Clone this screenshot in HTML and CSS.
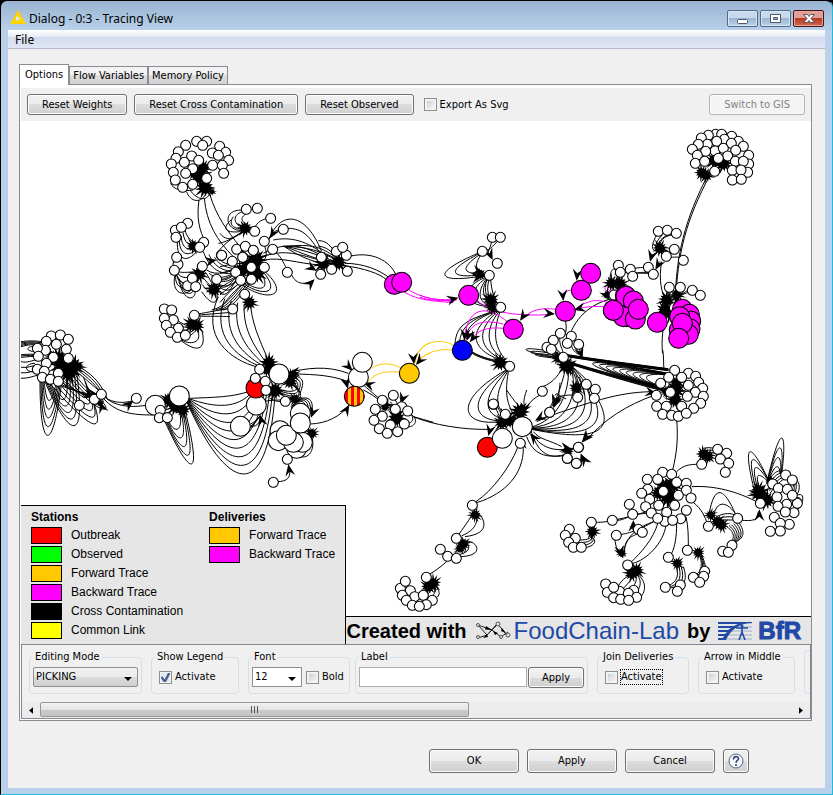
FILE: index.html
```html
<!DOCTYPE html>
<html lang="en">
<head>
<meta charset="utf-8">
<title>Dialog - 0:3 - Tracing View</title>
<link rel="stylesheet" href="styles.css">
</head>
<body>
<div class="window">
  <header class="titlebar">
    <svg class="app-icon" viewBox="0 0 16 14" aria-hidden="true"><path d="M8 0 16 14H0Z" fill="#ffd200"/><path d="M6 6v5l5-2.500Z" fill="#dbe6f0"/></svg>
    <h1 class="title">Dialog - 0:3 - Tracing View</h1>
    <button class="win-btn" aria-label="Minimize"><svg viewBox="0 0 29 15"><rect x="9.500" y="8.500" width="10" height="4" rx="1" fill="#fff" stroke="#535666"/></svg></button>
    <button class="win-btn" aria-label="Maximize"><svg viewBox="0 0 29 15"><path d="M9.500 3.500h10v8h-10ZM12.500 6.500v2h4v-2Z" fill="#fff" fill-rule="evenodd" stroke="#535666"/></svg></button>
    <button class="win-btn close" aria-label="Close"><svg viewBox="0 0 29 15"><path d="M9.500 3.500h4l1.500 2 1.500-2h4l-3.500 4 3.500 4h-4l-1.500-2-1.500 2h-4l3.500-4Z" fill="#fff" stroke="#535666"/></svg></button>
  </header>
  <div class="client">
    <nav class="menubar"><button class="menu">File</button></nav>
    <main class="content">
      <div class="tabs" role="tablist">
        <button class="tab active" role="tab" aria-selected="true">Options</button>
        <button class="tab" role="tab">Flow Variables</button>
        <button class="tab" role="tab">Memory Policy</button>
      </div>
      <section class="panel">
        <div class="toolbar">
          <button class="btn">Reset Weights</button>
          <button class="btn">Reset Cross Contamination</button>
          <button class="btn">Reset Observed</button>
          <label class="check"><input type="checkbox">Export As Svg</label>
          <button class="btn push" disabled>Switch to GIS</button>
        </div>
        <div class="canvas">
          <svg id="graph" class="graph" viewBox="21 121 790 523" preserveAspectRatio="xMinYMin slice" role="img" aria-label="Delivery network">
            <defs><pattern id="stripes" width="18" height="60" patternUnits="userSpaceOnUse" x="375"><rect width="18" height="60" fill="#ffc800"/><rect width="9" height="60" fill="#f00"/></pattern></defs>
          </svg>
          <div class="credits">
            <strong class="by">Created with</strong>
            <svg class="lab-mark" viewBox="0 0 36 20" aria-hidden="true"><g fill="none" stroke="#222"><path d="M3 4 17 9 23 3 33 16M3 17 12 14 22 3M3 4 12 14 17 9 26 16 33 11"/></g><g fill="#e6e6e6" stroke="#555"><circle cx="3" cy="4" r="1.500"/><circle cx="3" cy="16" r="1.500"/><circle cx="23" cy="3" r="2"/><circle cx="26" cy="16" r="1.500"/><circle cx="33" cy="14" r="2"/></g><path d="m11 5 6 4-7-.500ZM8 17l4-4 1 3ZM18 10l5 2-3 2ZM27 7l4 5-5-2Z"/></svg>
            <span class="lab">FoodChain-Lab</span>
            <strong class="by">by</strong>
            <svg class="bfr-mark" viewBox="0 0 34 18" aria-hidden="true"><path d="M0 1h34M0 5h34M0 9h34M0 13h34M0 17h34" stroke="#c3cad6" stroke-width="2"/><path d="M0 0h34v1C22 1 12 8 8 18H0v-2h5l1-2H0v-2h7l2-2H0V8h10l3-2H0V4h16l4-2H0Z" fill="#2149a5"/><path d="M18 6h12M24 5v6M24 10l-3 8M24 10l3 8" stroke="#2149a5" fill="none" stroke-width="1.600"/><circle cx="24" cy="4" r="1.500" fill="#2149a5"/></svg>
            <span class="bfr">BfR</span>
          </div>
          <div class="legend">
            <div class="legend-col">
              <h2>Stations</h2>
              <ul>
                <li><i class="swatch red"></i>Outbreak</li>
                <li><i class="swatch green"></i>Observed</li>
                <li><i class="swatch orange"></i>Forward Trace</li>
                <li><i class="swatch magenta"></i>Backward Trace</li>
                <li><i class="swatch black"></i>Cross Contamination</li>
                <li><i class="swatch yellow"></i>Common Link</li>
              </ul>
            </div>
            <div class="legend-col">
              <h2>Deliveries</h2>
              <ul>
                <li><i class="swatch orange"></i>Forward Trace</li>
                <li><i class="swatch magenta"></i>Backward Trace</li>
              </ul>
            </div>
          </div>
        </div>
        <div class="options">
          <div class="option-row">
            <fieldset class="w-mode"><legend>Editing Mode</legend><select class="mode" aria-label="Editing Mode"><option>PICKING</option></select></fieldset>
            <fieldset class="w-show"><legend>Show Legend</legend><label class="check"><input type="checkbox" checked>Activate</label></fieldset>
            <fieldset class="w-font"><legend>Font</legend><select class="size" aria-label="Font size"><option>12</option></select><label class="check"><input type="checkbox">Bold</label></fieldset>
            <fieldset class="w-label"><legend>Label</legend><input class="text" type="text" aria-label="Label"><button class="btn">Apply</button></fieldset>
            <fieldset class="w-join"><legend>Join Deliveries</legend><label class="check"><input type="checkbox"><span class="focus">Activate</span></label></fieldset>
            <fieldset class="w-arrow"><legend>Arrow in Middle</legend><label class="check"><input type="checkbox">Activate</label></fieldset>
            <fieldset class="w-arrow"></fieldset>
          </div>
          <div class="scrollbar">
            <button class="scroll-arrow" aria-label="Scroll left"><svg viewBox="0 0 5 8"><path d="M5 0v8L0 4Z"/></svg></button>
            <div class="track"><div class="thumb"><i></i><i></i><i></i></div></div>
            <button class="scroll-arrow" aria-label="Scroll right"><svg viewBox="0 0 5 8"><path d="M0 0v8l5-4Z"/></svg></button>
          </div>
        </div>
      </section>
      <footer class="actions">
        <button class="btn wide">OK</button>
        <button class="btn wide">Apply</button>
        <button class="btn wide">Cancel</button>
        <button class="btn help" aria-label="Help"><svg viewBox="0 0 16 16"><circle cx="8" cy="8" r="7" fill="#f4f7fb" stroke="#53647f"/><path d="M5.500 6.500c0-4 5-3.500 5-.800 0 1.800-2.400 1.800-2.400 4M8 11v2" fill="none" stroke="#33486e" stroke-width="1.600"/></svg></button>
      </footer>
    </main>
  </div>
</div>
<script src="graph.js"></script>
</body>
</html>
```

FILE: graph.js
```js
// Each region has its own origin; its units are a third of a pixel.
// curves: [count, first cubic, last cubic, colour]; the curves between are interpolated.
const regions = [
  { at: [20, 120],
    curves: [
      [1, [537,240,530,290,535,330,560,372]], [1, [553,235,560,310,590,360,640,410]], [1, [570,225,590,290,620,330,660,380]],
      [1, [500,215,510,245,545,255,560,215]], [1, [510,210,530,240,560,245,570,220]], [1, [452,190,460,210,490,215,520,210]],
      [5, [472,365,470,420,500,430,530,395], [495,330,500,350,510,360,525,370]],
      [5, [465,465,450,530,510,540,535,480], [475,455,490,460,510,455,540,455]],
      [4, [480,495,500,560,540,530,520,500], [470,465,490,500,500,500,530,490]],
      [4, [545,515,590,580,600,530,585,500], [550,450,570,470,570,490,580,490]],
      [4, [550,395,560,420,580,470,650,460], [600,420,610,430,620,430,650,440]],
      [5, [590,490,610,520,640,520,670,470], [560,450,590,470,620,455,660,440]],
      [4, [575,570,620,560,640,520,680,480], [610,570,640,560,650,540,690,490]],
      [2, [633,300,600,330,620,345,690,330], [640,290,620,320,650,330,680,325]]
    ],
    arrows: [[590,420,-10]],
    stars: [[540,168,34],[555,203,30],[550,143,24],[575,215,12],[520,378,22],[538,462,26],[582,508,26],[520,160,18]],
    small: '530,64 560,64 497,76 548,76 599,79 475,95 617,97 577,99 515,108 595,106 468,115 626,121 493,127 536,121 454,132 578,136 607,136 518,146 460,157 497,160 611,160 466,180 560,175 518,193 488,202 503,310 466,331 484,322 468,352 551,367 539,382 474,433 470,412 604,406 547,439 463,451 503,497 517,475 590,478 527,500' },
  { at: [220, 120],
    curves: [
      [3, [65,270,0,270,20,340,70,330], [90,275,60,290,60,300,80,315]],
      [3, [0,340,30,380,60,330,80,330], [-10,400,30,350,60,345,80,330]],
      [1, [104,325,110,305,130,298,142,295]],
      [1, [142,370,180,260,260,280,305,395]], [1, [160,360,210,350,260,360,320,410]],
      [1, [202,325,250,325,270,350,300,400]], [1, [145,360,160,330,175,330,180,330]],
      [3, [133,420,180,410,230,430,300,435], [130,400,200,360,260,380,310,410]],
      [5, [190,378,240,410,290,435,340,430], [200,380,270,370,310,380,355,420]],
      [1, [165,395,185,410,190,430,200,445]], [1, [215,465,230,495,255,495,280,480]],
      [3, [295,362,320,362,330,375,360,415], [295,395,320,400,335,410,355,420]],
      [1, [385,410,440,395,500,410,527,462]], [1, [375,430,430,430,480,450,510,475]], [1, [375,437,430,445,480,460,500,480]],
      [3, [60,490,140,550,220,530,130,450], [80,490,110,510,160,520,120,450]],
      [5, [0,520,40,540,40,450,90,440], [0,440,40,430,60,430,90,430]],
      [4, [50,400,80,380,90,420,100,430], [130,370,145,400,140,420,120,430]],
      [5, [0,570,30,520,60,500,90,470], [0,480,40,470,60,450,90,450]],
      [1, [560,505,590,525,610,535,700,545], null, '#f0f'], [1, [550,515,590,538,620,542,700,548], null, '#f0f']
    ],
    arrows: [[290,452,30],[284,478,-45],[150,355,120]],
    stars: [[75,325,24],[108,418,32],[90,440,38],[110,460,30],[60,450,24],[310,430,28],[355,428,28],[88,548,24]],
    small: '79,268 112,265 152,295 104,334 190,328 133,364 158,388 50,388 76,379 100,391 68,412 37,424 5,406 94,442 133,442 47,457 62,481 94,478 74,523 38,567 202,457 302,463 335,448 382,454 349,394 379,406 368,382 304,412',
    big: [['#f0f','523,493 545,487']] },
  { at: [420, 220],
    curves: [
      [4, [178,98,20,165,60,190,185,168], [182,105,160,140,170,150,190,155]],
      [1, [215,65,210,85,205,90,205,100]], [1, [235,62,215,80,210,90,200,90]],
      [3, [202,180,180,210,190,240,225,255], [212,180,215,210,220,230,232,250]],
      [4, [200,172,160,180,80,250,220,262], [200,178,190,210,200,250,225,260]],
      [4, [232,272,140,330,150,390,248,422], [240,275,220,330,220,380,258,420]],
      [3, [235,270,130,300,110,320,105,370], [235,270,160,300,140,320,130,370]],
      [3, [130,380,160,410,200,420,250,430], [155,395,190,415,220,420,250,425]],
      [5, [258,450,100,540,120,620,240,605], [265,455,250,540,270,560,285,595]],
      [1, [435,300,440,310,440,330,435,345]], [1, [582,235,500,250,460,310,450,345]],
      [1, [367,500,400,490,420,460,435,430]], [1, [360,525,330,540,310,570,300,600]],
      [4, [395,375,360,360,360,400,420,410], [421,345,415,370,425,380,430,400]],
      [3, [454,360,450,390,470,400,480,405], [476,373,480,390,480,400,485,410]],
      [4, [445,430,480,460,520,490,530,535], [440,430,470,460,470,490,475,520]],
      [3, [570,180,570,130,600,140,590,190], [600,150,610,160,605,180,600,195]],
      [1, [0,225,30,240,60,240,110,238], null, '#f0f'], [1, [0,232,30,242,60,243,110,240], null, '#f0f'],
      [1, [170,240,210,280,300,290,400,283], null, '#f0f'], [1, [410,268,360,262,330,270,305,300], null, '#f0f'],
      [1, [265,308,200,250,140,260,133,360], null, '#f0f'], [1, [250,312,200,300,150,300,138,360], null, '#f0f'],
      [1, [250,325,200,320,170,330,150,365], null, '#f0f'],
      [1, [484,215,440,200,430,220,430,240], null, '#f0f'], [1, [570,250,520,230,490,250,462,270], null, '#f0f'], [1, [550,260,510,258,490,262,462,268], null, '#f0f'],
      [3, [590,220,540,220,550,190,580,190], [600,220,570,210,560,200,590,190], '#f0f'],
      [1, [100,375,60,355,15,365,-2,395], null, '#ffc800'], [1, [98,390,60,385,15,395,-12,430], null, '#ffc800']
    ],
    arrows: [[115,233,-15],[405,282,5],[300,302,125],[133,362,95],[140,362,110],[150,367,125],[430,243,85],[470,182,95],[462,270,165],[218,120,65],[190,160,20],[190,168,-10],[400,565,110],[568,240,60],[488,415,70]],
    stars: [[182,163,18],[212,240,26],[216,262,20],[240,428,26],[438,438,28],[470,502,20],[575,190,24],[600,195,20],[560,225,14],[415,415,20],[300,575,30]],
    small: '217,52 241,52 187,94 232,130 208,166 242,262 269,439 221,553 421,340 454,349 400,361 381,382 442,370 476,373 394,388 430,412 367,514 499,493 526,508 473,532 523,535 595,136 601,157 582,225',
    big: [['#f0f','146,226 280,328 436,274 512,160 484,211 616,228 620,290 580,271'],['#00f','127,391']] },
  { at: [620, 120],
    curves: [
      [2, [270,165,198,300,172,400,167,550], [266,160,194,300,169,400,165,550]],
      [1, [125,425,115,480,125,520,140,550]], [1, [120,425,120,440,110,445,105,450]],
      [4, [110,345,90,380,95,400,120,390], [160,345,130,345,115,370,120,380]], [1, [155,388,140,380,130,385,125,385]],
      [1, [185,412,160,410,150,412,145,415]], [1, [85,442,60,442,45,444,31,448]], [1, [90,458,60,455,45,460,38,462]],
      [1, [30,480,10,490,0,500,-10,510]], [1, [0,456,20,458,60,460,90,460]],
      [3, [148,510,130,540,120,560,130,590], [150,515,150,540,140,560,140,580]], [3, [215,515,190,520,170,530,165,550], [190,508,190,520,170,530,170,550]],
      [1, [136,590,125,640,125,680,128,700]]
    ],
    arrows: [[90,425,105],[106,449,120]],
    stars: [[285,120,28],[310,130,28],[245,158,22],[258,166,22],[120,385,24],[170,525,22],[140,540,26],[133,570,24],[150,580,24],[0,490,22]],
    small: '287,43 265,46 305,43 335,49 244,54 313,58 290,64 355,64 262,73 235,73 334,70 370,79 217,88 285,93 310,85 347,91 257,94 232,106 386,106 323,108 295,115 226,130 386,132 254,124 346,124 370,124 284,154 383,157 337,151 363,150 337,180 364,178 115,334 142,331 169,340 163,388 139,409 190,421 85,442 31,448 38,469 100,463 148,502 181,502 217,511 241,526 163,563',
    big: [['#f0f','18,529 40,543 10,590 -20,571 46,597 55,568 112,607 187,568 208,583 212,603 178,630 210,627 205,643 179,590 187,610 176,655']] },
  { at: [20, 310],
    curves: [
      [5, [60,215,60,430,100,430,125,215], [72,215,80,280,90,300,110,215]],
      [5, [75,215,150,390,200,400,170,190], [90,215,120,290,150,290,140,190]],
      [5, [85,215,220,370,260,380,215,260], [120,190,200,290,220,280,190,200]],
      [4, [110,160,230,330,290,310,240,270], [150,170,200,250,230,260,245,245]],
      [4, [170,165,210,190,240,210,262,268], [150,170,190,200,210,220,235,240]],
      [4, [90,215,130,230,180,250,230,255], [110,190,150,240,190,255,230,270]],
      [5, [3,95,25,92,40,92,70,95], [3,110,25,105,40,100,60,110]],
      [3, [3,134,25,132,40,132,60,135], [3,142,25,140,40,138,60,140]],
      [4, [3,205,25,205,35,200,55,195], [3,155,25,160,35,150,50,150]],
      [2, [50,125,10,125,20,105,50,110], [50,185,10,190,10,160,45,160]],
      [1, [255,262,280,280,310,280,340,272]], [1, [262,268,300,295,350,290,380,286]], [1, [250,265,290,310,340,315,400,315]],
      [5, [435,335,510,500,550,520,495,300], [445,330,460,370,490,370,480,310]],
      [2, [475,85,540,140,560,110,545,60], [485,90,520,110,550,90,530,60]],
      [3, [530,18,570,20,600,18,630,20], [530,13,570,5,590,2,630,-5]],
      [5, [470,30,500,50,510,50,530,50], [480,85,520,80,530,60,530,50]],
      [5, [430,275,450,260,460,255,470,260], [430,310,455,310,460,290,480,290]]
    ],
    arrows: [[340,272,-40],[240,275,-110],[235,255,10],[225,262,20],[190,165,0]],
    stars: [[115,145,30],[130,165,38],[160,168,32],[145,185,36],[95,140,20],[515,42,24],[530,46,24],[445,270,24],[465,290,26],[488,300,24],[240,280,12]],
    small: '94,78 121,75 79,94 145,88 109,103 139,118 76,121 52,115 55,139 100,142 79,160 145,145 52,178 73,184 115,190 67,202 91,208 115,214 178,286 223,268 244,253 349,265 433,-3 455,0 460,30 433,25 439,46 475,55 451,67 472,82 496,76 523,16',
    big: [['#fff','406,286 478,258']], late: '421,301 418,323 442,323' },
  { at: [220, 310],
    curves: [
      [6, [-5,-40,-60,80,30,150,115,172], [92,-10,100,60,130,110,148,160]],
      [10, [-92,265,-20,262,40,262,90,243], [-100,275,20,545,140,590,165,255]],
      [2, [385,190,320,165,260,175,205,187], [385,215,320,190,260,195,205,190]],
      [1, [370,210,376,214,380,220,382,232]], [1, [272,342,320,340,360,320,388,285]],
      [4, [220,215,280,290,200,270,170,245], [210,220,250,240,220,250,180,240]],
      [3, [230,240,240,220,230,210,205,200], [240,250,260,200,240,205,210,190]],
      [4, [215,300,220,260,290,240,275,310], [215,290,230,270,260,260,260,310]],
      [1, [240,440,280,450,290,390,265,360]],
      [1, [170,515,200,515,215,505,208,470]], [1, [90,350,120,350,120,330,120,315]],
      [3, [40,370,70,380,90,360,120,318], [75,350,100,340,110,330,120,318]],
      [1, [430,225,460,250,470,260,482,268]], [1, [430,240,450,250,465,260,480,272]],
      [1, [580,320,600,325,620,332,640,337]], [2, [575,315,600,330,580,355,560,350], [570,310,590,330,570,345,550,340]],
      [6, [466,300,480,285,500,285,530,320], [540,260,545,280,550,300,530,320]],
      [2, [150,265,165,275,180,275,190,275], [130,275,150,270,170,270,190,270]],
      [1, [455,175,480,155,520,160,545,175], null, '#ffc800'], [1, [440,220,470,180,510,185,540,186], null, '#ffc800'],
      [1, [630,98,600,110,590,130,585,160], null, '#ffc800'], [1, [630,130,610,135,600,150,595,163], null, '#ffc800']
    ],
    arrows: [[205,188,175],[205,192,190],[398,182,45],[384,236,75],[388,284,-60],[430,218,200],[582,163,85],[588,165,130],[273,323,110],[262,360,225],[205,463,-100],[120,315,-105],[542,282,110],[488,295,140]],
    stars: [[147,158,26],[140,180,20],[165,242,28],[215,195,18],[210,215,24],[225,268,20],[275,370,20],[530,325,30],[495,293,14]],
    small: '520,256 487,271 466,298 545,290 526,298 563,303 487,319 462,331 478,356 511,345 553,342 533,365 502,370',
    big: [['#fff','109,285'],['#f00','108,234'],['#fff','61,349 177,192 180,362 230,415 175,392 247,397 220,397 199,376 241,310 241,339 415,202 427,157'],['url(#stripes)','403,259'],['#ffc800','568,190']],
    late: '119,178 106,205 136,214 138,241 196,274 202,448 160,517' },
  { at: [540, 340],
    curves: [
      [9, [385,100,90,45,80,60,370,150], [385,105,290,95,310,125,370,140]],
      [7, [70,42,180,60,280,72,385,86], [80,50,180,66,280,80,385,92]],
      [6, [70,60,180,94,280,120,370,143], [75,68,180,100,280,130,370,153]],
      [3, [70,55,-100,30,-60,10,80,45], [60,55,-40,50,-40,30,60,50]],
      [7, [-30,262,60,240,90,150,85,80], [-25,268,230,320,220,240,150,140]],
      [1, [345,155,250,155,180,175,0,238]], [1, [345,165,260,195,190,240,140,300]],
      [2, [-30,270,0,330,50,335,100,325], [-20,290,0,350,40,355,80,345]],
      [4, [30,205,40,170,60,165,100,165], [75,90,70,120,50,180,35,200]],
      [1, [368,30,372,50,370,70,372,90]], [1, [410,235,415,300,410,340,398,390]],
      [1, [410,395,430,375,450,373,475,373]], [1, [455,440,540,435,610,465,650,485]], [1, [450,480,480,500,490,520,500,545]],
      [1, [355,545,340,600,300,640,275,665]], [1, [378,555,370,610,320,660,278,670]], [1, [410,550,410,590,405,620,395,640]], [1, [438,530,445,560,445,590,445,618]],
      [1, [154,547,180,547,200,547,217,541]], [1, [217,541,250,535,270,530,320,515]], [1, [225,595,225,620,235,635,245,650]],
      [2, [340,545,300,560,260,580,250,640], [300,580,260,590,250,610,255,650]], [2, [229,586,260,580,280,580,350,540], [217,541,260,545,260,520,330,520]],
      [2, [595,545,560,450,525,420,508,520], [593,530,560,480,530,480,520,530]],
      [3, [590,530,575,515,550,520,530,530], [590,540,570,540,560,540,540,540]],
      [6, [595,545,620,580,610,600,575,610], [560,560,590,580,580,600,570,610]], [1, [600,540,640,545,655,540,655,515]],
      [4, [645,460,600,280,640,320,685,420], [660,450,640,390,660,400,690,430]],
      [4, [680,430,730,210,740,300,725,400], [685,430,700,370,720,370,720,400]],
      [5, [680,430,710,380,730,380,760,430], [690,460,760,360,800,440,765,470]],
      [3, [770,510,800,480,790,450,765,470], [760,520,790,500,780,480,765,480]],
      [4, [490,325,510,320,520,325,533,328], [490,350,510,345,520,340,541,357]],
      [4, [150,590,180,600,160,630,110,622], [160,580,150,600,140,600,110,600]],
      [5, [290,700,340,740,300,790,270,780], [280,700,260,710,240,720,230,750]],
      [4, [430,680,445,720,430,745,400,745], [410,680,420,720,400,730,380,740]],
      [4, [485,645,505,690,500,710,470,715], [480,650,490,680,480,700,465,705]]
    ],
    arrows: [[130,305,125],[95,330,15],[125,345,-120],[38,198,110],[658,508,-90],[250,655,65],[244,652,80],[280,540,-90],[350,160,10]],
    stars: [[405,150,32],[405,180,26],[410,130,24],[380,155,20],[85,335,14],[375,440,30],[385,470,34],[400,435,28],[355,460,24],[110,145,20],[85,80,24],[490,342,22],[504,350,22],[658,460,30],[680,480,28],[690,420,14],[655,450,24],[512,525,18],[532,545,22],[545,555,22],[157,575,22],[275,700,24],[290,692,24],[412,670,20],[475,638,20],[245,640,14],[280,560,10]],
    small: '404,91 386,112 445,100 425,112 467,109 362,130 476,127 445,136 488,145 391,157 466,157 349,166 442,169 490,169 350,199 379,199 425,199 482,190 461,205 368,223 395,226 415,229 439,220 29,217 116,322 82,355 110,370 368,397 395,403 322,418 353,418 410,427 439,430 323,448 305,460 370,454 439,451 415,466 453,474 329,478 356,496 404,496 317,500 439,511 334,519 380,517 374,544 422,536 398,541 353,535 268,493 278,523 217,541 154,547 229,586 295,568 307,577 263,675 88,568 76,586 106,595 86,607 100,622 124,622 197,732 202,757 239,754 221,742 281,751 221,773 242,778 265,760 290,772 266,781 385,652 421,735 376,742 412,754 442,631 494,694 460,712 491,709 479,727 505,559 593,535 576,616 548,634 565,637 485,373 533,328 560,340 541,357 566,370 556,397 661,490 737,405 698,432 757,420 715,445 742,448 711,471 772,490 757,466 740,493 714,499 762,518 736,516 703,532 748,553 721,550 691,574 721,573' },
  { at: [380, 400],
    curves: [
      [1, [100,50,160,75,250,90,330,88]], [1, [412,145,390,200,340,270,288,305]], [1, [430,145,430,220,380,280,290,308]],
      [3, [255,410,340,400,310,350,290,335], [235,405,260,370,275,350,280,335]],
      [3, [235,470,320,470,290,420,260,425], [225,460,240,445,245,440,250,430]],
      [1, [150,522,170,510,185,498,200,485]], [4, [135,600,200,600,175,560,160,555], [120,600,130,570,140,570,150,560]],
      [5, [345,20,360,50,365,70,380,80], [380,30,390,50,400,60,410,65]], [2, [435,20,430,10,430,0,440,-30], [418,20,410,10,400,0,380,-30]],
      [1, [460,95,480,120,510,120,545,140]], [1, [440,110,460,165,500,175,550,165]], [1, [470,65,490,55,500,50,509,42]]
    ],
    arrows: [[325,108,105],[420,45,75],[433,42,95],[465,62,150],[450,100,-130],[580,150,10],[602,160,-110],[520,20,110],[605,128,130],[425,112,-90]],
    stars: [[365,68,24],[385,62,24],[400,60,18],[285,345,20],[250,432,22],[240,445,18],[145,560,24],[160,550,24],[565,155,14]],
    small: '421,130 340,12 376,43 509,37 595,142 562,175 589,190 277,316 229,415 181,448 203,469 229,475 139,532 61,565 76,544 91,572 67,586 104,590 130,586 79,601 157,601 97,616 139,614 118,619',
    big: [['#f00','322,142'],['#fff','367,115 427,80']] }
];

const NS = 'http://www.w3.org/2000/svg';
const svg = document.getElementById('graph');

function add(parent, name, attrs) {
  const el = document.createElementNS(NS, name);
  for (const key in attrs) el.setAttribute(key, attrs[key]);
  parent.appendChild(el);
  return el;
}

// A burst of arrowheads that meet at one station.
function starPath([x, y, r]) {
  let d = '';
  for (let i = 0; i < 26; i++) {
    const a = i * Math.PI / 13 + r;
    const len = i % 2 ? r * 0.55 : r * (1.1 + 0.25 * Math.sin(i * 2.3 + x));
    d += (i ? 'L' : 'M') + (x + len * Math.cos(a)).toFixed(1) + ' ' + (y + len * Math.sin(a)).toFixed(1);
  }
  return d + 'Z';
}

function layer(region, cls) {
  return add(svg, 'g', { class: cls, transform: `translate(${region.at}) scale(.33333)` });
}

function circles(parent, points, r, fill) {
  for (const p of points.split(' ')) {
    const [cx, cy] = p.split(',');
    add(parent, 'circle', { cx, cy, r, fill });
  }
}

for (const region of regions) {
  const g = layer(region, 'edges');
  for (const [n, a, b, colour] of region.curves) {
    for (let i = 0; i < n; i++) {
      const c = a.map((v, k) => n > 1 ? v + (b[k] - v) * i / (n - 1) : v);
      add(g, 'path', { d: `M${c.slice(0, 2)}C${c.slice(2)}`, stroke: colour || '#000' });
    }
  }
}
for (const region of regions) {
  const g = layer(region, 'heads');
  for (const star of region.stars) add(g, 'path', { d: starPath(star) });
  for (const [x, y, a] of region.arrows) {
    add(g, 'path', { d: 'M0 0-35-15-22 0-35 15Z', transform: `translate(${x} ${y}) rotate(${a})` });
  }
}
for (const region of regions) {
  const g = layer(region, 'nodes');
  circles(g, region.small, 15, '#fff');
  for (const [fill, points] of region.big || []) circles(g, points, 30, fill);
  if (region.late) circles(g, region.late, 15, '#fff');
}
```

FILE: styles.css
```css
* { box-sizing: border-box; }
html { background: #000; }
body, button, input, select, fieldset, h1, h2, ul { margin: 0; padding: 0; }
body, button, input, select {
  font: 11px/14px "DejaVu Sans Condensed", "Noto Sans", sans-serif;
  color: #000;
}
button, input, select { border-radius: 0; }

.window {
  min-height: 100vh;
  display: flex;
  flex-direction: column;
  padding: 2px 7px 6px;
  border: 1px solid #000;
  border-right-color: #26b8d8;
  border-bottom-color: #26b8d8;
  border-radius: 7px 7px 0 0;
  background: linear-gradient(#99b4d1, #b9d1ea 30px);
}
.titlebar { display: flex; align-items: center; gap: 2px; height: 27px; }
.app-icon { width: 16px; height: 14px; margin: 0 1px 0 2px; }
.title { flex: 1; font: 12px/16px "Noto Sans", sans-serif; padding-top: 4px; }
.win-btn {
  width: 31px;
  height: 17px;
  margin-top: 4px;
  border: 1px solid #566a85;
  border-radius: 2px;
  background: linear-gradient(#c7d9ec 50%, #9bb5d0 50%, #bcd4ec);
  box-shadow: inset 0 0 0 1px #d6e5f4;
}
.win-btn:first-of-type { margin-right: 0; }
.win-btn svg { display: block; width: 29px; height: 15px; }
.win-btn.close {
  margin-right: 1px;
  border-color: #451318;
  background: linear-gradient(#dfa096 50%, #b83a22 50%, #d0664c);
  box-shadow: inset 0 0 0 1px #e5a79b;
}

.client { flex: 1; display: flex; flex-direction: column; background: #f0f0f0; }
.menubar {
  height: 19px;
  border-bottom: 1px solid #b6bccc;
  background: linear-gradient(#fff, #e5eaf5 7px, #d4dbed 7px, #e1e6f6);
}
.menu { border: 0; background: none; padding: 3px 7px; font: 12px/14px "Noto Sans", sans-serif; }
.content { flex: 1; display: flex; flex-direction: column; padding: 15px 13px 15px 11px; }

.tabs { display: flex; align-items: flex-end; height: 21px; }
.tab {
  height: 18px;
  padding: 1px 3px 0;
  margin-bottom: 1px;
  white-space: nowrap;
  border: 1px solid #898c95;
  border-bottom: 0;
  background: linear-gradient(#f3f3f3 50%, #dedede 50%, #d2d2d2);
}
.tab.active { position: relative; height: 21px; padding: 0 5px 1px; margin-bottom: 0; background: #fff; }
.panel {
  flex: 1;
  display: flex;
  flex-direction: column;
  margin-top: -1px;
  padding: 3px 0 1px 1px;
  border: 1px solid #898c95;
  background: #fff;
}
.toolbar { display: flex; align-items: center; gap: 7px; padding: 6px; background: #f0f0f0; }
.btn {
  height: 21px;
  padding: 0 13px;
  white-space: nowrap;
  border: 1px solid #707070;
  border-radius: 3px;
  background: linear-gradient(#f2f2f2, #ebebeb 50%, #dddddd 50%, #cfcfcf);
  box-shadow: inset 0 0 0 1px #fcfcfc;
}
.toolbar .btn { padding: 0 14px; }
.btn:disabled { color: #838383; border-color: #adb2b5; background: #f4f4f4; }
.push { margin-left: auto; }
.check { display: flex; align-items: center; gap: 3px; white-space: nowrap; }
.toolbar .check { margin-left: 3px; }
.check input {
  appearance: none;
  width: 13px;
  height: 13px;
  border: 1px solid #8e8f8f;
  background: linear-gradient(135deg, #cbcfd5, #f6f6f6) content-box;
  padding: 2px;
  box-shadow: inset 0 0 0 1px #f4f4f4;
}
.check input:checked {
  background: url("data:image/svg+xml,%3Csvg xmlns='http://www.w3.org/2000/svg' viewBox='0 0 11 11'%3E%3Cpath d='M2 5l3 4 4-8' fill='none' stroke='%234b5f97' stroke-width='2'/%3E%3C/svg%3E") border-box, #e6e9ee;
}

.canvas { position: relative; flex: 1; min-height: 320px; overflow: hidden; background: #fff; }
.graph { position: absolute; inset: 0; width: 100%; height: 100%; }
.edges { fill: none; stroke-width: 3; }
.nodes { stroke: #000; stroke-width: 3.2; }
.credits {
  position: absolute;
  left: 0;
  right: 0;
  bottom: 0;
  height: 28px;
  display: flex;
  align-items: center;
  justify-content: flex-end;
  gap: 8px;
  padding-right: 10px;
  white-space: nowrap;
  border-top: 1px solid #000;
  background: #e6e6e6;
}
.by, .lab, .bfr { font: bold 20px/26px "Liberation Sans", sans-serif; }
.lab { font-size: 24px; font-weight: 400; color: #2149a5; margin-left: -5px; }
.bfr { font-size: 24px; color: #2149a5; margin-left: -2px; -webkit-text-stroke: 1px #2149a5; }
.lab-mark { width: 36px; height: 20px; }
.bfr-mark { width: 34px; height: 18px; }
.legend {
  position: absolute;
  left: 0;
  bottom: 0;
  display: flex;
  gap: 26px;
  padding: 3px 10px 4px;
  border: solid #000;
  border-width: 1px 1px 0 0;
  background: #e6e6e6;
  font: 12px/19px "Liberation Sans", sans-serif;
}
.legend h2 { font: bold 12px/17px "Liberation Sans", sans-serif; }
.legend ul { list-style: none; }
.legend li { display: flex; align-items: center; gap: 9px; }
.swatch { width: 31px; height: 17px; border: 1px solid #000; }
.red { background: #f00; }
.green { background: #0f0; }
.orange { background: #ffc800; }
.magenta { background: #f0f; }
.black { background: #000; }
.yellow { background: #ff0; }

.options { border: 1px solid #828790; background: #f0f0f0; }
.option-row { display: flex; gap: 9px; padding: 5px 0 8px 7px; overflow: hidden; }
fieldset {
  display: flex;
  flex: none;
  min-width: 0;
  height: 44px;
  padding: 3px;
  border: 1px solid #d5dfe5;
  border-radius: 4px;
}
legend { padding: 0 2px; white-space: nowrap; }
fieldset > .check { height: 20px; margin-left: 4px; }
.w-mode { width: 113px; }
.w-show { width: 88px; }
.w-font { width: 102px; }
.w-label { width: 233px; margin-left: -4px; }
.w-join { width: 92px; }
.w-arrow { width: 97px; }
select {
  appearance: none;
  height: 20px;
  padding: 0 2px;
  border: 1px solid #8e8f8f;
  background: url("data:image/svg+xml,%3Csvg xmlns='http://www.w3.org/2000/svg' viewBox='0 0 8 4'%3E%3Cpath d='M0 0h8L4 4Z'/%3E%3C/svg%3E") right 5px top 9px / 8px 4px no-repeat, linear-gradient(#f2f2f2, #ebebeb 50%, #dddddd 50%, #cfcfcf);
}
.mode { width: 105px; border-radius: 2px; }
.size {
  width: 50px;
  background: url("data:image/svg+xml,%3Csvg xmlns='http://www.w3.org/2000/svg' viewBox='0 0 8 4'%3E%3Cpath d='M0 0h8L4 4Z'/%3E%3C/svg%3E") right 5px top 9px / 8px 4px no-repeat, #fff;
}
.text { flex: 1; min-width: 0; height: 20px; border: 1px solid #abadb3; background: #fff; margin-right: 1px; }
.focus { outline: 1px dotted #000; }

.scrollbar { display: flex; height: 16px; background: #ececec; }
.scroll-arrow { width: 18px; border: 0; background: none; display: grid; place-items: center; }
.scroll-arrow svg { width: 4px; height: 7px; }
.track { flex: 1; }
.thumb {
  width: 57%;
  height: 15px;
  display: flex;
  align-items: center;
  justify-content: center;
  gap: 2px;
  border: 1px solid #979797;
  border-radius: 2px;
  background: linear-gradient(#f2f2f2, #e4e4e4 50%, #cbcbcb 50%, #c4c4c4);
}
.thumb i { width: 1px; height: 7px; background: #555; }

.actions { display: flex; justify-content: flex-end; gap: 8px; padding: 28px 63px 0 0; }
.actions .btn { height: 24px; }
.wide { width: 90px; }
.help { width: 26px; padding: 0; display: grid; place-items: center; }
.actions .help { padding: 0; }
.help svg { width: 16px; height: 16px; }
```
